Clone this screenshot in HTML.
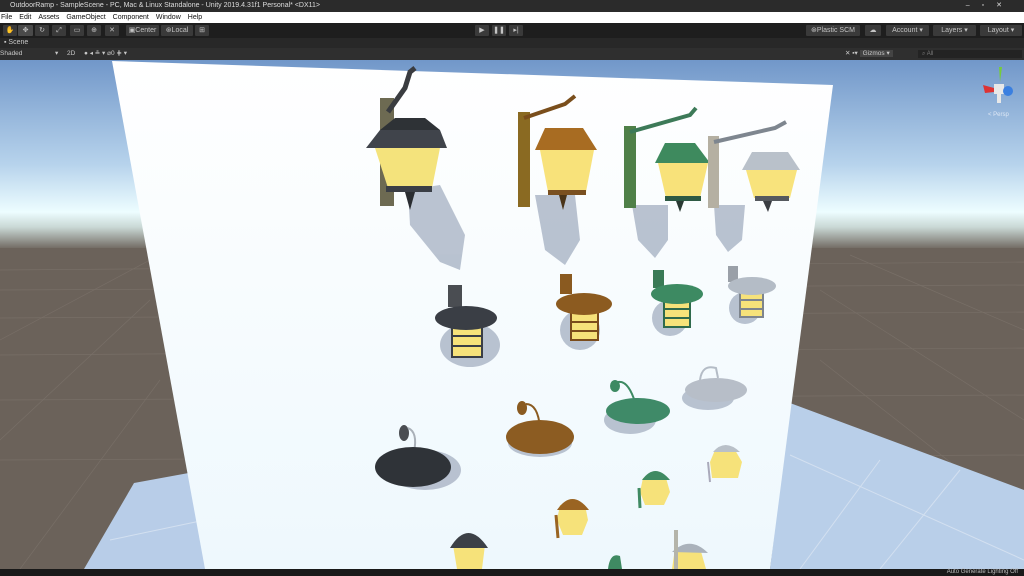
<!DOCTYPE html>
<html><head><meta charset="utf-8"><style>
*{margin:0;padding:0;box-sizing:border-box}
body{width:1024px;height:576px;overflow:hidden;background:#191919;font-family:"Liberation Sans",sans-serif;font-size:7px;color:#c8c8c8;position:relative}
.abs{position:absolute}
#title{left:0;top:0;width:1024px;height:12px;background:#2b2b2b;color:#ddd;font-size:7px;line-height:12px;padding-left:10px}
#menu{left:0;top:12px;width:1024px;height:11px;background:#fff;color:#111;font-size:7px;line-height:11px}
#menu span{margin-right:7px}
#tb{left:0;top:23px;width:1024px;height:15px;background:#1e1e1e}
.btn{position:absolute;top:2px;height:11px;background:#3a3a3a;border-radius:1px;color:#c4c4c4;font-size:7px;line-height:11px;text-align:center}
#tab{left:0;top:38px;width:1024px;height:10px;background:#282828;font-size:7px;line-height:10px;padding-left:4px}
#stb{left:0;top:48px;width:1024px;height:12px;background:#2f2f2f;font-size:6.5px;line-height:12px}
#status{left:0;top:569px;width:1024px;height:7px;background:#191919;color:#bbb;font-size:6px;line-height:7px;text-align:right;padding-right:6px}
</style></head><body>
<div id="title" class="abs">OutdoorRamp - SampleScene - PC, Mac &amp; Linux Standalone - Unity 2019.4.31f1 Personal* &lt;DX11&gt;<span style="position:absolute;right:10px;letter-spacing:12px">–▫✕</span></div>
<div id="menu" class="abs"><span style="margin-left:1px">File</span><span>Edit</span><span>Assets</span><span>GameObject</span><span>Component</span><span>Window</span><span>Help</span></div>
<div id="tb" class="abs">
<div class="btn" style="left:3px;width:14px">✋</div>
<div class="btn" style="left:18px;width:15px;background:#4a4a4a">✥</div>
<div class="btn" style="left:35px;width:14px">↻</div>
<div class="btn" style="left:52px;width:14px">⤢</div>
<div class="btn" style="left:70px;width:14px">▭</div>
<div class="btn" style="left:87px;width:14px">⊕</div>
<div class="btn" style="left:105px;width:14px">✕</div>
<div class="btn" style="left:126px;width:33px">▣Center</div>
<div class="btn" style="left:161px;width:32px">⊛Local</div>
<div class="btn" style="left:195px;width:14px">⊞</div>
<div class="btn" style="left:475px;width:14px">▶</div>
<div class="btn" style="left:492px;width:14px">❚❚</div>
<div class="btn" style="left:509px;width:14px">▸|</div>
<div class="btn" style="left:806px;width:54px">⊛Plastic SCM</div>
<div class="btn" style="left:865px;width:16px">☁</div>
<div class="btn" style="left:886px;width:43px">Account ▾</div>
<div class="btn" style="left:933px;width:43px">Layers ▾</div>
<div class="btn" style="left:980px;width:42px">Layout ▾</div>
</div>
<div id="tab" class="abs">▪ Scene</div>
<div id="stb" class="abs"><span style="position:absolute;left:0">Shaded</span><span style="position:absolute;left:55px">▾</span><span style="position:absolute;left:67px">2D</span><span style="position:absolute;left:84px">● ◂ ≗ ▾ ⌀0 ⋕ ▾</span><span style="position:absolute;left:845px">✕ ▪▾ <span style="background:#444;padding:0 3px">Gizmos ▾</span></span><span style="position:absolute;left:918px;width:104px;top:2px;height:8px;line-height:8px;background:#232323;padding-left:4px;font-size:6px;color:#777">⌕ All</span></div>

<svg class="abs" style="left:0;top:60px" width="1024" height="509" viewBox="0 60 1024 509">
<defs>
<linearGradient id="sky" x1="0" y1="0" x2="0" y2="1">
<stop offset="0" stop-color="#7197c9"/><stop offset="0.55" stop-color="#b7d3ec"/><stop offset="0.8" stop-color="#edfdff"/><stop offset="0.88" stop-color="#c9d8d5"/><stop offset="1" stop-color="#6c635b"/>
</linearGradient>
<linearGradient id="wall" x1="0" y1="0" x2="0" y2="1"><stop offset="0" stop-color="#ffffff"/><stop offset="1" stop-color="#eef8fd"/></linearGradient>
</defs>
<rect x="0" y="60" width="1024" height="190" fill="url(#sky)"/>
<rect x="0" y="248" width="1024" height="321" fill="#6b625a"/>
<g stroke="#786f67" stroke-width="0.7" fill="none">
<line x1="0" y1="270" x2="1024" y2="262"/><line x1="0" y1="290" x2="1024" y2="285"/><line x1="0" y1="318" x2="1024" y2="312"/><line x1="0" y1="355" x2="1024" y2="348"/><line x1="0" y1="400" x2="1024" y2="395"/><line x1="0" y1="460" x2="1024" y2="455"/>
<line x1="0" y1="340" x2="150" y2="260"/><line x1="0" y1="440" x2="150" y2="300"/><line x1="20" y1="569" x2="160" y2="380"/>
<line x1="1024" y1="330" x2="850" y2="255"/><line x1="1024" y1="420" x2="820" y2="290"/><line x1="1024" y1="520" x2="820" y2="360"/>
</g>
<polygon points="134,483 205,470 205,569 84,569" fill="#b8cde8"/>
<polygon points="790,403 1024,490 1024,569 770,569" fill="#b9cfe9"/>
<g stroke="#d3e0f0" stroke-width="1" fill="none"><line x1="790" y1="455" x2="1024" y2="560"/><line x1="880" y1="460" x2="800" y2="569"/><line x1="960" y1="470" x2="880" y2="569"/><line x1="110" y1="540" x2="205" y2="520"/></g>
<polygon points="112,61 833,85 770,569 205,569" fill="url(#wall)"/>
<g fill="#b2bccc" opacity="0.9">
<path d="M408,190 L440,185 L465,235 L460,270 L440,262 L410,225Z"/>
<path d="M535,195 L575,195 L580,240 L565,265 L545,250Z"/>
<path d="M632,205 L668,205 L668,240 L655,258 L638,240Z"/>
<path d="M714,205 L745,205 L742,240 L728,252 L716,235Z"/>
<ellipse cx="470" cy="345" rx="30" ry="22"/><ellipse cx="580" cy="330" rx="20" ry="20"/><ellipse cx="670" cy="318" rx="18" ry="18"/><ellipse cx="745" cy="308" rx="16" ry="16"/>
<ellipse cx="425" cy="470" rx="36" ry="20"/><ellipse cx="540" cy="443" rx="32" ry="14"/><ellipse cx="630" cy="420" rx="26" ry="14"/><ellipse cx="708" cy="398" rx="26" ry="12"/>
</g>
<g>
<rect x="380" y="98" width="14" height="108" fill="#6d6a52"/><path d="M388,112 L405,88 L410,72 L415,68" stroke="#3a3c40" stroke-width="5" fill="none"/>
<polygon points="380,130 440,130 447,148 366,148" fill="#40444b"/><polygon points="395,118 425,118 440,130 380,130" fill="#2e3236"/>
<polygon points="375,148 440,148 432,188 388,188" fill="#f4e37c"/><rect x="386" y="186" width="46" height="6" fill="#3a3e45"/><path d="M405,192 L415,192 L410,210Z" fill="#2a2d31"/>
<rect x="518" y="112" width="12" height="95" fill="#8a6a22"/><path d="M524,118 L565,104 L575,96" stroke="#7a4e1c" stroke-width="4" fill="none"/>
<polygon points="545,128 583,128 597,150 535,150" fill="#a86c22"/><polygon points="540,150 594,150 586,192 548,192" fill="#f8e27a"/><rect x="548" y="190" width="38" height="5" fill="#7a5020"/><path d="M559,195 L567,195 L563,210Z" fill="#4a3418"/>
<rect x="624" y="126" width="12" height="82" fill="#4f8048"/><path d="M630,132 L690,115 L696,108" stroke="#3d7a58" stroke-width="4" fill="none"/>
<polygon points="665,143 695,143 710,163 655,163" fill="#3e8a5e"/><polygon points="658,163 708,163 700,198 666,198" fill="#f8e27a"/><rect x="665" y="196" width="36" height="5" fill="#2e5a44"/><path d="M676,201 L684,201 L680,212Z" fill="#2a3a33"/>
<rect x="708" y="136" width="11" height="72" fill="#b5b0a2"/><path d="M714,142 L775,128 L786,122" stroke="#7e868f" stroke-width="4" fill="none"/>
<polygon points="752,152 788,152 800,170 742,170" fill="#b9c1ca"/><polygon points="746,170 797,170 790,198 754,198" fill="#f8e37c"/><rect x="755" y="196" width="34" height="5" fill="#55595e"/><path d="M763,201 L772,201 L768,212Z" fill="#3a3d42"/>
</g>
<g>
<rect x="448" y="285" width="14" height="22" fill="#4a4d52"/><rect x="452" y="325" width="30" height="32" fill="#f6e27a" stroke="#3a3e45" stroke-width="2"/><ellipse cx="466" cy="318" rx="31" ry="12" fill="#3a3e45"/><path d="M452,336 H482 M452,346 H482" stroke="#3a3e45" stroke-width="2"/>
<rect x="560" y="274" width="12" height="20" fill="#8a5a20"/><rect x="571" y="311" width="27" height="29" fill="#f6e27a" stroke="#7a4c1c" stroke-width="2"/><ellipse cx="584" cy="304" rx="28" ry="11" fill="#8c5b20"/><path d="M571,322 H598 M571,331 H598" stroke="#7a4c1c" stroke-width="2"/>
<rect x="653" y="270" width="11" height="18" fill="#3a7a56"/><rect x="664" y="299" width="26" height="28" fill="#f6e27a" stroke="#2f6a4c" stroke-width="2"/><ellipse cx="677" cy="294" rx="26" ry="10" fill="#3d8a62"/><path d="M664,309 H690 M664,318 H690" stroke="#2f6a4c" stroke-width="2"/>
<rect x="728" y="266" width="10" height="16" fill="#9aa0a8"/><rect x="740" y="291" width="23" height="26" fill="#f6e27a" stroke="#7e858d" stroke-width="2"/><ellipse cx="752" cy="286" rx="24" ry="9" fill="#b4bcc6"/><path d="M740,300 H763 M740,309 H763" stroke="#7e858d" stroke-width="2"/>
</g>
<g>
<ellipse cx="404" cy="433" rx="5" ry="8" fill="#4a4d52"/><path d="M408,428 Q418,432 414,452" stroke="#a9b0b8" stroke-width="2" fill="none"/><ellipse cx="413" cy="467" rx="38" ry="20" fill="#2f3338"/>
<ellipse cx="522" cy="408" rx="5" ry="7" fill="#8a5a20"/><path d="M526,404 Q538,404 540,428" stroke="#8a5a20" stroke-width="2" fill="none"/><ellipse cx="540" cy="437" rx="34" ry="17" fill="#8c5c22"/>
<ellipse cx="615" cy="386" rx="5" ry="6" fill="#3d8a62"/><path d="M618,382 Q628,380 635,402" stroke="#3d8a62" stroke-width="2" fill="none"/><ellipse cx="638" cy="411" rx="32" ry="13" fill="#3f8a68"/>
<path d="M700,380 Q702,364 716,368 L718,378" stroke="#b4bcc6" stroke-width="2" fill="none"/><ellipse cx="716" cy="390" rx="31" ry="12" fill="#b7bec8"/>
</g>
<g>
<path d="M715,450 L735,450 L742,462 L738,478 L712,478 L710,462Z" fill="#f6e27a"/><path d="M713,452 Q725,438 740,452Z" fill="#b9c0c8"/><path d="M708,462 L710,482" stroke="#aab" stroke-width="2"/>
<path d="M643,478 L666,478 L670,492 L664,505 L645,505 L640,492Z" fill="#f6e27a"/><path d="M642,480 Q655,462 670,480Z" fill="#3f8a62"/><path d="M639,488 L640,508" stroke="#3f8a62" stroke-width="3"/>
<path d="M560,505 L585,505 L588,520 L582,535 L563,535 L557,520Z" fill="#f6e27a"/><path d="M557,510 Q572,488 589,510Z" fill="#9a6422"/><path d="M556,515 L558,538" stroke="#9a6422" stroke-width="3"/>
<path d="M453,545 L485,545 L482,569 L457,569Z" fill="#f6e27a"/><path d="M450,548 Q468,518 488,548Z" fill="#3c4046"/>
<path d="M675,548 L700,548 L706,569 L672,569Z" fill="#f6e27a"/><path d="M672,552 Q690,535 708,553Z" fill="#aab2bb"/><path d="M676,530 L676,569" stroke="#b4b4aa" stroke-width="4"/>
<path d="M608,569 Q610,552 620,556 L622,569Z" fill="#3f8a62"/>
</g>
<g>
<rect x="994" y="84" width="10" height="10" fill="#e8e8e8"/>
<polygon points="999,67 1002,67 1000,82" fill="#76cc3a"/>
<polygon points="983,85 994,88 994,92 985,93" fill="#d33"/>
<circle cx="1008" cy="91" r="5" fill="#3a7fe0"/>
<rect x="997" y="94" width="4" height="9" fill="#e8e8e8"/>
<text x="988" y="116" font-size="6" fill="#dfe8f5" font-family="Liberation Sans">&lt; Persp</text>
</g>
</svg>
<div id="status" class="abs">Auto Generate Lighting Off</div>
</body></html>
